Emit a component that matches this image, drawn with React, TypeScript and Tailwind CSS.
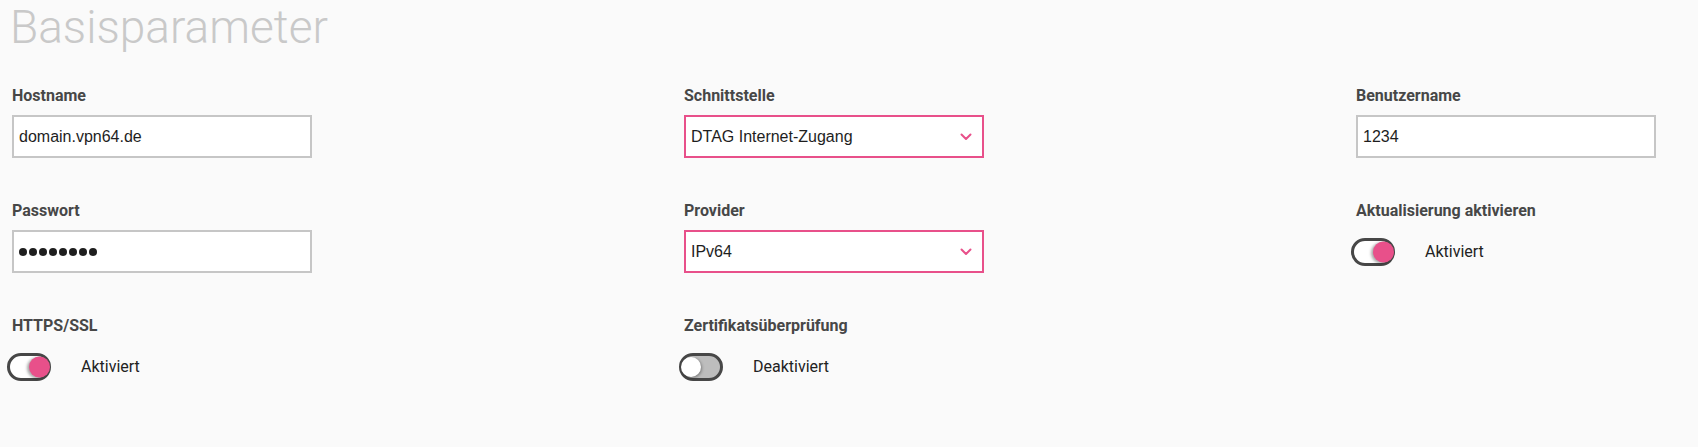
import React from 'react';

const labelCls = "block text-[16px] leading-[20px] font-bold text-[#474747] mb-[9px] font-['Roboto',sans-serif]";

function TextField({ label, value, password }: { label: string; value: string; password?: boolean }) {
  return (
    <div>
      <label className={labelCls}>{label}</label>
      <div className="w-[300px] h-[43px] border-2 border-[#c6c6c6] bg-white flex items-center pl-[5px]">
        {password ? (
          <span className="flex gap-[2px]">
            {Array.from({ length: 8 }).map((_, i) => (
              <span key={i} className="w-[8px] h-[8px] rounded-full bg-[#1e1e1e]" />
            ))}
          </span>
        ) : (
          <span className="text-[16px] text-[#1e1e1e] font-['Liberation_Sans',Arial,sans-serif]">{value}</span>
        )}
      </div>
    </div>
  );
}

function SelectField({ label, value }: { label: string; value: string }) {
  return (
    <div>
      <label className={labelCls}>{label}</label>
      <div className="w-[300px] h-[43px] border-2 border-[#e8508a] bg-white flex items-center justify-between pl-[5px] pr-[10px]">
        <span className="text-[16px] text-[#1e1e1e] font-['Liberation_Sans',Arial,sans-serif]">{value}</span>
        <svg width="12" height="8" viewBox="0 0 12 8" fill="none">
          <path d="M1.5 1.5 L6 6 L10.5 1.5" stroke="#e8508a" strokeWidth="2" strokeLinecap="round" strokeLinejoin="round" />
        </svg>
      </div>
    </div>
  );
}

function ToggleField({ label, on }: { label: string; on: boolean }) {
  return (
    <div>
      <label className={labelCls}>{label}</label>
      <div className="h-[43px] flex items-center gap-[30px] ml-[-5px]">
        <div
          className={
            on
              ? 'relative w-[44px] h-[28px] rounded-full border-[3px] border-[#474747] bg-white'
              : 'relative w-[44px] h-[28px] rounded-full border-[3px] border-[#474747] bg-[#bdbdbd]'
          }
        >
          {on ? (
            <span className="absolute top-1/2 -translate-y-1/2 right-[-2px] w-[21px] h-[21px] rounded-full bg-[#e8508a] shadow-[-2px_1px_3px_rgba(0,0,0,0.35)]" />
          ) : (
            <span className="absolute top-1/2 -translate-y-1/2 left-[-1px] w-[20px] h-[20px] rounded-full bg-white shadow-[1px_1px_3px_rgba(0,0,0,0.35)]" />
          )}
        </div>
        <span className="text-[16px] text-[#222] font-['Roboto',sans-serif]">{on ? 'Aktiviert' : 'Deaktiviert'}</span>
      </div>
    </div>
  );
}

export default function App() {
  return (
    <div className="min-h-screen w-full bg-[#fafafa] px-3 font-['Roboto',sans-serif]">
      <h1 className="pt-1 ml-[-2px] text-[46px] leading-[46px] font-light text-[#c9c9c9] font-['Roboto',sans-serif]">
        Basisparameter
      </h1>
      <div className="mt-[36px] grid grid-cols-[672px_672px_1fr] gap-y-[43px]">
        <TextField label="Hostname" value="domain.vpn64.de" />
        <SelectField label="Schnittstelle" value="DTAG Internet-Zugang" />
        <TextField label="Benutzername" value="1234" />
        <TextField label="Passwort" value="" password />
        <SelectField label="Provider" value="IPv64" />
        <ToggleField label="Aktualisierung aktivieren" on />
        <ToggleField label="HTTPS/SSL" on />
        <ToggleField label="Zertifikatsüberprüfung" on={false} />
      </div>
    </div>
  );
}
